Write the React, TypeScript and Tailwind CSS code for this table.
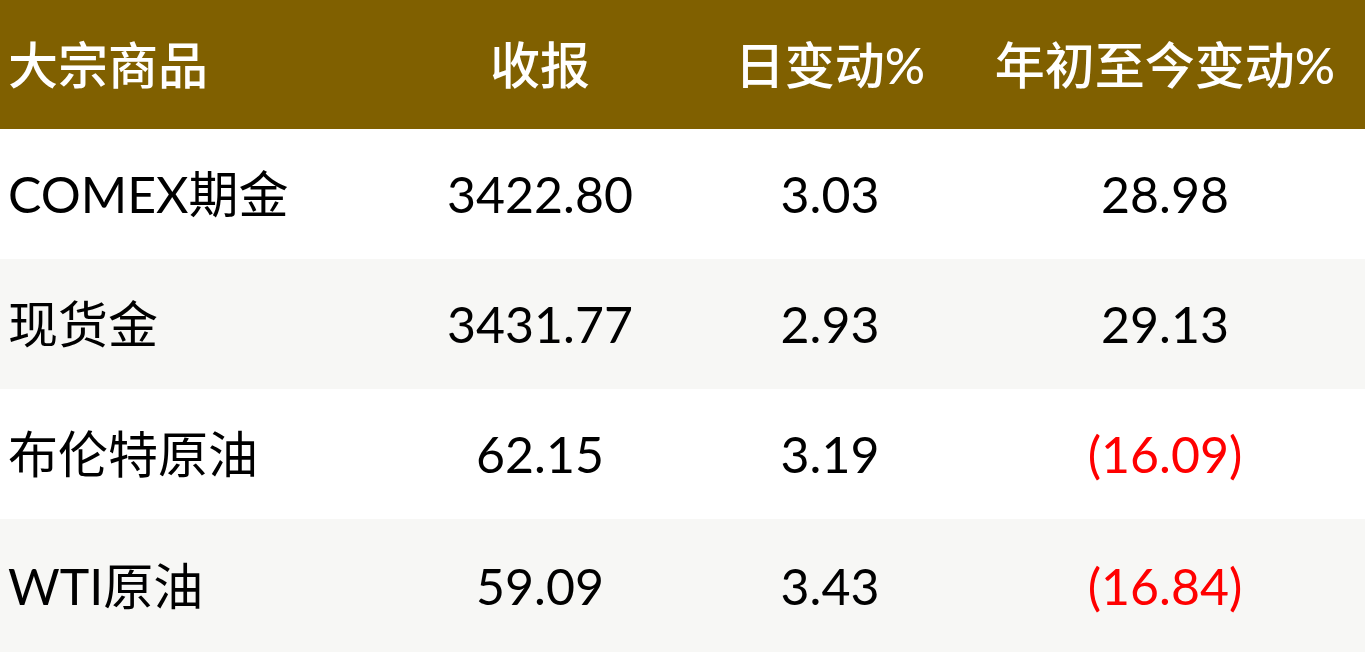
import React from "react";

const rows: { name: string; close: string; day: string; ytd: string; neg: boolean }[] = [
  { name: "COMEX期金", close: "3422.80", day: "3.03", ytd: "28.98", neg: false },
  { name: "现货金", close: "3431.77", day: "2.93", ytd: "29.13", neg: false },
  { name: "布伦特原油", close: "62.15", day: "3.19", ytd: "(16.09)", neg: true },
  { name: "WTI原油", close: "59.09", day: "3.43", ytd: "(16.84)", neg: true },
];

export default function App() {
  return (
    <div
      className="w-[1365px] h-[652px] flex flex-col bg-white overflow-hidden"
      style={{ fontFamily: '"Lato", "Noto Sans CJK SC", sans-serif' }}
    >
      <div className="h-[129px] bg-[#806000] grid grid-cols-[400px_280px_300px_370px] items-center text-white text-[50px] font-medium leading-none">
        <div className="pl-2">大宗商品</div>
        <div className="text-center">收报</div>
        <div className="text-center">日变动%</div>
        <div className="text-center">年初至今变动%</div>
      </div>
      {rows.map((r, i) => (
        <div
          key={r.name}
          className={
            "grid grid-cols-[400px_280px_300px_370px] items-center text-black text-[50px] leading-none " +
            (i % 2 === 1 ? "bg-[#f7f7f5] " : "bg-white ") +
            (i === 3 ? "flex-1" : "h-[130px]")
          }
        >
          <div className="pl-2">{r.name}</div>
          <div className="text-center">{r.close}</div>
          <div className="text-center">{r.day}</div>
          <div className={"text-center " + (r.neg ? "text-[#ff0000]" : "")}>{r.ytd}</div>
        </div>
      ))}
    </div>
  );
}
